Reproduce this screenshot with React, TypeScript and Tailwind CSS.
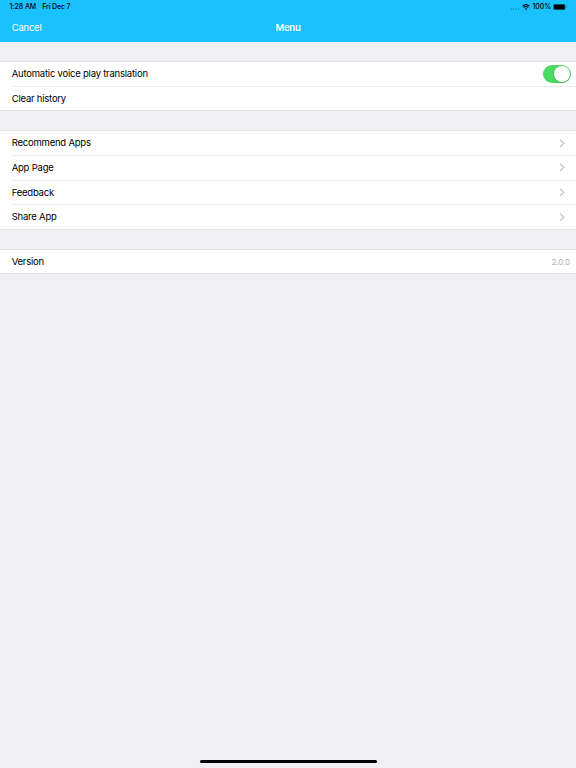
import type { ReactNode } from 'react';

const links = ['Recommend Apps', 'App Page', 'Feedback', 'Share App'];

function Chevron() {
  return (
    <svg width="6" height="9" viewBox="0 0 6 9" fill="none" stroke="#c4c4c8" strokeWidth="1.2">
      <path d="M1.1 .8 4.8 4.3 1.1 7.8" />
    </svg>
  );
}

function Group({ children }: { children: ReactNode }) {
  return <section className="border-y border-[#e3e3e6] bg-white">{children}</section>;
}

function Row({ label, divider, children }: { label: string; divider?: boolean; children?: ReactNode }) {
  return (
    <div className="pl-[11.7px]">
      <div className={`flex items-center justify-between ${divider ? 'h-[24.7px] border-b border-[#ececee]' : 'h-[23.5px]'}`}>
        <span className="pt-[1.1px] text-[9.5px] tracking-[-0.22px] text-black">{label}</span>
        {children}
      </div>
    </div>
  );
}

function StatusBar() {
  return (
    <div className="flex h-[14px] items-center justify-between pl-[9.5px] pr-[9px] text-[7px] font-medium text-black">
      <div className="flex gap-[6px] pt-px">
        <span className="tracking-[-0.04px]">1:28 AM</span>
        <span className="tracking-[-0.14px]">Fri Dec 7</span>
      </div>
      <div className="flex items-center">
        <svg width="10" height="6" viewBox="0 0 10 6" className="mr-[2px]" fill="#0c6888">
          <circle cx="1.2" cy="5" r=".6" />
          <circle cx="3.7" cy="5" r=".6" />
          <circle cx="6.2" cy="5" r=".6" />
          <circle cx="8.7" cy="5" r=".6" />
        </svg>
        <svg width="8" height="6" viewBox="0 0 8 6" className="mr-[3px]">
          <path d="M4 6 2.8 4.7Q4 3.8 5.2 4.7Z" />
          <path d="M1.7 3.5Q4 1.5 6.3 3.5M.5 2.2Q4-.9 7.5 2.2" fill="none" stroke="black" strokeWidth="1.1" />
        </svg>
        <span className="mr-[2px] pt-px tracking-[-0.1px]">100%</span>
        <svg width="14" height="6" viewBox="0 0 14 6">
          <rect x=".3" y=".3" width="12" height="5.4" rx="1.5" fill="none" stroke="#0c6888" strokeWidth=".6" />
          <rect x=".8" y=".6" width="11" height="4.8" rx="1" />
          <path d="M13.2 2.2v1.6" stroke="#0c6888" strokeWidth=".8" />
        </svg>
      </div>
    </div>
  );
}

export default function App() {
  return (
    <div className="flex h-screen flex-col overflow-hidden bg-[#efeff4] font-[Inter,sans-serif]">
      <header className="h-[42px] bg-[#19c1fd]">
        <StatusBar />
        <div className="grid h-7 grid-cols-3 items-center px-[11.7px] text-[9.5px] tracking-[-0.22px] text-white">
          <button className="text-left">Cancel</button>
          <h1 className="text-center font-semibold">Menu</h1>
        </div>
      </header>
      <main className="flex flex-1 flex-col gap-[19px] pt-[19px]">
        <Group>
          <Row label="Automatic voice play translation" divider>
            <button role="switch" aria-checked="true" className="mr-[4.8px] flex h-[17.5px] w-[28.7px] items-center justify-end rounded-full bg-[#4cd964] pr-[0.8px]">
              <span className="size-[16px] rounded-full bg-white shadow-[0_1px_2px_rgba(0,0,0,0.2)]" />
            </button>
          </Row>
          <Row label="Clear history" />
        </Group>
        <Group>
          {links.map((label, i) => (
            <Row key={label} label={label} divider={i < links.length - 1}>
              <span className="mr-[11px]"><Chevron /></span>
            </Row>
          ))}
        </Group>
        <Group>
          <Row label="Version">
            <span className="mr-[6px] text-[8px] tracking-[-0.1px] text-[#b2b2b2]">2.0.0</span>
          </Row>
        </Group>
      </main>
      <footer className="flex justify-center pb-[5px]">
        <div className="h-[3px] w-[177px] rounded-full bg-black" />
      </footer>
    </div>
  );
}
